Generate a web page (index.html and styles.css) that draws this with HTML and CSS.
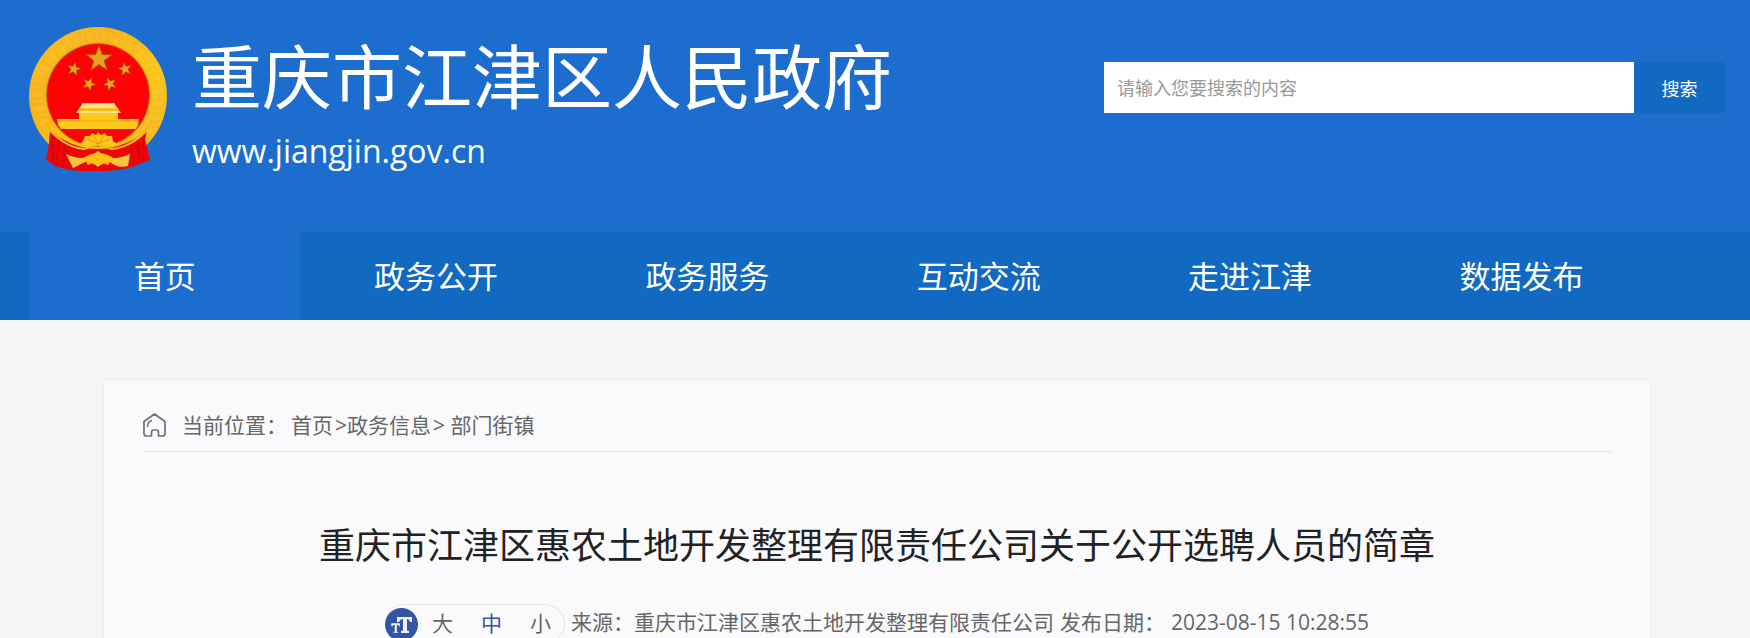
FILE: index.html
```html
<!DOCTYPE html>
<html lang="zh-CN">

<head>
    <meta charset="UTF-8">
    <meta name="viewport" content="width=device-width, initial-scale=1.0">
    <title>重庆市江津区人民政府</title>
    <link rel="stylesheet" href="styles.css">
</head>

<body>
    <header class="header">
        <div class="logo">
            <svg class="emblem" viewBox="0 0 138 144" aria-hidden="true">
                <defs>
                    <linearGradient id="gold" x1="0" y1="0" x2="1" y2="1">
                        <stop offset="0" stop-color="#fbc520" />
                        <stop offset="0.3" stop-color="#f6b21c" />
                        <stop offset="0.6" stop-color="#fcc419" />
                        <stop offset="1" stop-color="#f0b32a" />
                    </linearGradient>
                    <path id="star" d="M0-10 2.4-3.2 9.5-3.1 3.8 1.2 5.9 8.1 0 4-5.9 8.1-3.8 1.2-9.5-3.1-2.4-3.2Z" />
                </defs>
                <circle cx="69" cy="69" r="69" fill="url(#gold)" />
                <circle cx="69" cy="69" r="60" fill="none" stroke="#ffd95a" stroke-width="10" stroke-dasharray="2 3 5 4" opacity=".2" />
                <circle cx="69" cy="68" r="52" fill="#c87908" />
                <circle cx="69" cy="68" r="51" fill="#fd0204" />
                <!-- 红绸 -->
                <path d="M21 103Q43 122 69 122T118 103L116 112 121 133 100 141Q69 147 42 143L28 140 17 133 20 116Z" fill="#ee0508" />
                <path d="M23 108 24 134M30 112 27 138M36 117 34 141M115 108 114 134M108 112 112 136M102 117 105 138" fill="none" stroke="#b90609" stroke-width="1.5" opacity=".6" />
                <path d="M17 94Q34 121 57 121L69 115 81 121Q104 121 121 94L124 97Q108 120 83 123L69 119 55 123Q33 121 14 97Z" fill="#f7b717" />
                <path d="M37 127Q52 134 62 129L69 124 76 129Q86 134 101 127L99 139Q88 142 80 134L69 139 58 134 44 141Z" fill="#f5c53a" />
                <path d="M52 133Q69 119 87 133L82 134 79 138 74 136 69 140 64 136 59 138 57 134Z" fill="#ffc014" />
                <path d="M51 117 54 114 56 109 61 109 63 106 67 108 69 105 72 108 76 106 78 109 83 109 84 114 88 117 78 120 69 117 60 120Z" fill="#fbc71b" />
                <path d="M69 117 58 112M69 117 65 109M69 117 75 109M69 117 81 112" stroke="#e99b10" />
                <!-- 天安门 -->
                <path d="M53 76H86V80H88L92 86H89V92H110L109 98 107 102H32L29 98 28 92H50V86H47L51 80H53Z" fill="#ffc91b" />
                <path d="M53 77H86L88 81H51ZM49 84H90V86H49Z" fill="#ffe28a" />
                <path d="M51 83H88M30 94H109" stroke="#eaa51e" />
                <g fill="#e4a71c" stroke="#a75d0a" stroke-width=".6">
                    <use href="#star" transform="translate(70 32) scale(1.35)" />
                    <use href="#star" transform="translate(45 42) rotate(12) scale(.7)" />
                    <use href="#star" transform="translate(96 42) rotate(-12) scale(.7)" />
                    <use href="#star" transform="translate(60 57) rotate(24) scale(.7)" />
                    <use href="#star" transform="translate(81 57) rotate(-24) scale(.7)" />
                </g>
            </svg>
            <div class="site">
                <div class="site-name">重庆市江津区人民政府</div>
                <div class="site-url">www.jiangjin.gov.cn</div>
            </div>
        </div>
        <form class="search">
            <input type="text" placeholder="请输入您要搜索的内容" aria-label="搜索内容">
            <button type="button">搜索</button>
        </form>
    </header>

    <nav class="nav">
        <ul>
            <li><a href="#" class="nav-selected">首页</a></li>
            <li><a href="#">政务公开</a></li>
            <li><a href="#">政务服务</a></li>
            <li><a href="#">互动交流</a></li>
            <li><a href="#">走进江津</a></li>
            <li><a href="#">数据发布</a></li>
        </ul>
    </nav>

    <main class="container">
        <div class="location">
            <svg class="home" viewBox="0 0 23 24" aria-hidden="true">
                <path d="M1 8.5 11.5 1 22 8.5V20.500Q22 23 19.500 23H15.500V19.500Q15.500 17 13.500 17H10.500Q8.500 17 8.500 19.500V23H3.500Q1 23 1 20.500Z" fill="none" stroke="#6b7078" stroke-width="1.700" stroke-linejoin="round" />
                <path d="M4.500 13.500Q4.500 9 8.500 7.500" fill="none" stroke="#6b7078" stroke-width="1.500" stroke-linecap="round" />
            </svg>
            <span class="label">当前位置：</span>
            <div class="crumbs"><a href="#">首页</a>&gt;<a href="#">政务信息</a>&gt; <a href="#">部门街镇</a></div>
        </div>

        <h1>重庆市江津区惠农土地开发整理有限责任公司关于公开选聘人员的简章</h1>

        <div class="info">
            <div class="font-size">
                <svg class="tt" viewBox="0 0 33 33" aria-hidden="true">
                    <circle cx="16.5" cy="16.5" r="16.500" fill="#3355a4" />
                    <path d="M12 9H27V14H25Q24.500 11 22 11V22.500L24 23V25H16V23L18 22.500V11Q15 11 14 14H12Z" fill="#f2f4fa" />
                    <path d="M6 15H15V18.500H13.500L13 17H12V23.500L13.500 24V25H8V24L9.500 23.500V17H8.500L7.500 18.500H6Z" fill="#f2f4fa" stroke="#3355a4" stroke-width=".5" />
                </svg>
                <button type="button">大</button>
                <button type="button" class="size-selected">中</button>
                <button type="button">小</button>
            </div>
            <span>来源：重庆市江津区惠农土地开发整理有限责任公司</span>
            <span>发布日期：</span>
            <span>2023-08-15 10:28:55</span>
        </div>
    </main>
</body>

</html>
```

FILE: styles.css
```css
* {
    margin: 0;
    padding: 0;
    box-sizing: border-box;
}

body {
    background: #f5f5f5;
    color: #666;
    font-family: "Open Sans", "Noto Sans CJK SC", sans-serif;
    font-size: 21px;
    line-height: 32px;
}

a {
    color: inherit;
    text-decoration: none;
}

ul {
    list-style: none;
}

button,
input {
    border: none;
    font-family: inherit;
}

button {
    cursor: pointer;
}

.header {
    display: flex;
    justify-content: space-between;
    align-items: flex-start;
    height: 232px;
    padding: 27px 25px 0 29px;
    background: #1c6dce;
    color: #fff;
}

.logo {
    display: flex;
    gap: 25px;
}

.emblem {
    width: 138px;
    height: 144px;
}

.site-name {
    font-size: 70px;
    line-height: 100px;
}

.site-url {
    font-size: 32px;
    line-height: 48px;
}

.search {
    display: flex;
    width: 621px;
    height: 51px;
    margin-top: 35px;
}

.search input {
    flex: 1;
    min-width: 0;
    padding: 0 13px;
    background: #fff;
    font-size: 18px;
    outline: none;
}

.search input::placeholder {
    color: #999;
}

.search button {
    width: 91px;
    background: #1169c1;
    color: #fff;
    font-size: 18px;
}

.nav {
    padding: 0 25px 0 29px;
    background: #1169c1;
}

.nav ul {
    display: flex;
}

.nav li {
    width: 16%;
}

.nav a {
    display: block;
    color: #fff;
    font-size: 31px;
    line-height: 88px;
    text-align: center;
}

.nav .nav-selected {
    background: #1c6dce;
}

.container {
    margin: 59px 99px 0 103px;
    padding: 0 39px;
    background: #fafafd;
    border: 1px solid #eee;
    border-bottom: none;
}

.location {
    display: flex;
    align-items: center;
    padding: 29px 0 10px;
    border-bottom: 1px solid #dfe0e2;
}

.home {
    width: 23px;
    height: 24px;
    margin-right: 16px;
}

.label {
    margin-right: 4px;
}

.crumbs a {
    margin-right: 2px;
}

h1 {
    margin-top: 67px;
    color: #222;
    font-size: 36px;
    font-weight: normal;
    line-height: 54px;
    text-align: center;
}

.info {
    display: flex;
    justify-content: center;
    align-items: center;
    gap: 6px;
    margin-top: 31px;
}

.info span,
.info button {
    padding-bottom: 4px;
}

.font-size {
    display: flex;
    align-items: center;
    gap: 28px;
    height: 40px;
    padding-right: 13px;
    border: 1px solid #e4e5e8;
    border-left: none;
    border-radius: 20px;
}

.tt {
    width: 33px;
    height: 33px;
    margin-right: -14px;
}

.font-size button {
    background: none;
    color: #666;
    font-size: 21px;
}

.font-size .size-selected {
    color: #3355a4;
}
```
